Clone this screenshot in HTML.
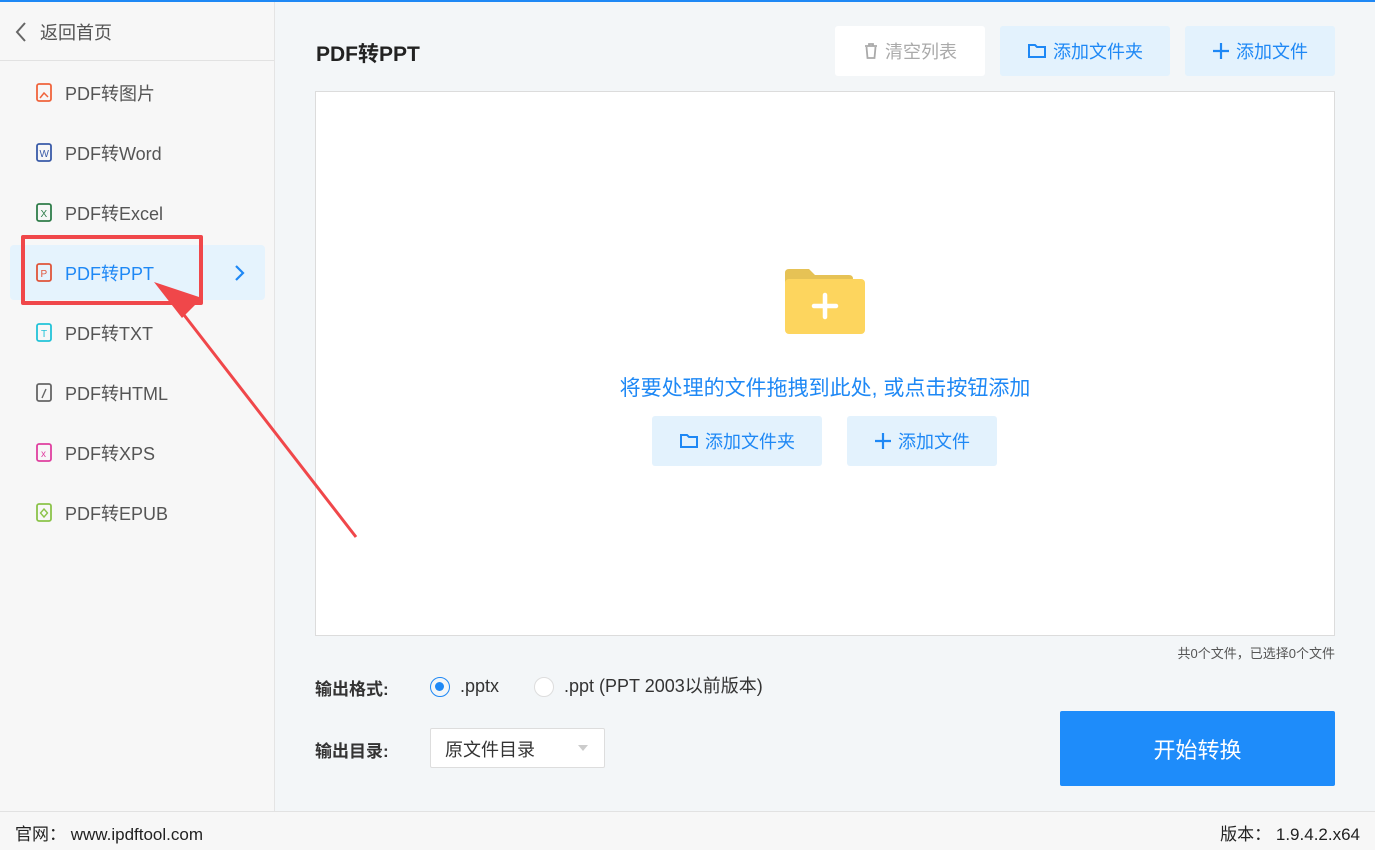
<!DOCTYPE html>
<html><head><meta charset="utf-8"><style>
*{margin:0;padding:0;box-sizing:border-box}
body{width:1375px;height:850px;position:relative;overflow:hidden;background:#f3f6f8;font-family:"Liberation Sans","Noto Sans CJK SC",sans-serif;color:#333}
.topline{position:absolute;left:0;top:0;width:1375px;height:2px;background:#1e88f5}
.side{position:absolute;left:0;top:2px;width:275px;height:809px;background:#f7f7f7;border-right:1px solid #e4e4e4}
.back{position:absolute;left:0;top:0;width:274px;height:59px;border-bottom:1px solid #e2e2e2;font-size:18px;color:#555}
.back span{position:absolute;left:40px;top:17px}
.item{position:absolute;left:10px;width:255px;height:55px;font-size:18px;color:#555;border-radius:4px}
.item span{position:absolute;left:55px;top:15px}
.item svg{position:absolute;left:26px;top:18px}
.item.act{background:#e5f3fd;color:#1e88f5}
.title{position:absolute;left:316px;top:38px;font-size:21px;font-weight:bold;color:#222}
.btn{position:absolute;top:26px;height:50px;border-radius:3px;font-size:18px;color:#1e88f5;background:#e3f2fd;display:flex;align-items:center;justify-content:center;gap:6px}
.drop{position:absolute;left:315px;top:91px;width:1020px;height:545px;background:#fff;border:1px solid #dcdcdc}
.foot{position:absolute;left:0;top:811px;width:1375px;height:39px;background:#f7f7f7;border-top:1px solid #e2e2e2;font-size:17px;color:#222}
</style></head><body>
<div class="topline"></div>
<div class="side">
 <div class="back"><svg style="position:absolute;left:14px;top:19px" width="14" height="22" viewBox="0 0 14 22"><path d="M11 2 L3 11 L11 20" fill="none" stroke="#666" stroke-width="2"/></svg><span>返回首页</span></div>
 <div class="item" style="top:63px"><svg width="18" height="20"><rect x="1" y="1" width="14" height="17" rx="2" fill="none" stroke="#f0643c" stroke-width="1.8"/><path d="M4 15 L8 10 L12 14" fill="none" stroke="#f0643c" stroke-width="1.5"/></svg><span>PDF转图片</span></div>
 <div class="item" style="top:123px"><svg width="18" height="20"><rect x="1" y="1" width="14" height="17" rx="2" fill="none" stroke="#3a5ba8" stroke-width="1.8"/><text x="3.5" y="14" font-size="10" fill="#3a5ba8" font-family="Liberation Sans">W</text></svg><span>PDF转Word</span></div>
 <div class="item" style="top:183px"><svg width="18" height="20"><rect x="1" y="1" width="14" height="17" rx="2" fill="none" stroke="#2f7d4a" stroke-width="1.8"/><text x="4.5" y="14" font-size="10" fill="#2f7d4a" font-family="Liberation Sans">X</text></svg><span>PDF转Excel</span></div>
 <div class="item act" style="top:243px"><svg width="18" height="20"><rect x="1" y="1" width="14" height="17" rx="2" fill="none" stroke="#e0553a" stroke-width="1.8"/><text x="4.5" y="14" font-size="10" fill="#e0553a" font-family="Liberation Sans">P</text></svg><span>PDF转PPT</span><svg style="left:224px;top:19px" width="12" height="18"><path d="M2 2 L9 9 L2 16" fill="none" stroke="#1e88f5" stroke-width="2.2"/></svg></div>
 <div class="item" style="top:303px"><svg width="18" height="20"><rect x="1" y="1" width="14" height="17" rx="2" fill="none" stroke="#22c3d8" stroke-width="1.8"/><text x="5" y="14" font-size="10" fill="#22c3d8" font-family="Liberation Sans">T</text></svg><span>PDF转TXT</span></div>
 <div class="item" style="top:363px"><svg width="18" height="20"><rect x="1" y="1" width="14" height="17" rx="2" fill="none" stroke="#666" stroke-width="1.8"/><path d="M6 15 L10 6" stroke="#666" stroke-width="1.4"/></svg><span>PDF转HTML</span></div>
 <div class="item" style="top:423px"><svg width="18" height="20"><rect x="1" y="1" width="14" height="17" rx="2" fill="none" stroke="#e040a0" stroke-width="1.8"/><text x="5" y="14" font-size="10" fill="#e040a0" font-family="Liberation Sans">x</text></svg><span>PDF转XPS</span></div>
 <div class="item" style="top:483px"><svg width="18" height="20"><rect x="1" y="1" width="14" height="17" rx="2" fill="none" stroke="#8bc34a" stroke-width="1.8"/><path d="M8 6 L11.5 10 L8 14 L4.5 10Z" fill="none" stroke="#8bc34a" stroke-width="1.4"/></svg><span>PDF转EPUB</span></div>
</div>
<div class="title">PDF转PPT</div>
<div class="btn" style="left:835px;width:150px;background:#fff;color:#aaa"><svg width="16" height="18"><path d="M2 4 H14 M6 4 V2 H10 V4 M3.5 5 L4.5 16 H11.5 L12.5 5" fill="none" stroke="#aaa" stroke-width="1.8"/></svg>清空列表</div>
<div class="btn" style="left:1000px;width:170px"><svg width="20" height="16"><path d="M2 2 H8 L10 4 H18 V14 H2 Z" fill="none" stroke="#1e88f5" stroke-width="2"/></svg>添加文件夹</div>
<div class="btn" style="left:1185px;width:150px"><svg width="18" height="18"><path d="M9 1 V17 M1 9 H17" stroke="#1e88f5" stroke-width="2.2"/></svg>添加文件</div>
<div class="drop">
 <svg style="position:absolute;left:469px;top:176px" width="82" height="66"><path d="M0 5 Q0 1 4 1 H24 L30 7 H64 Q68 7 68 11 V40 H0Z" fill="#e6c255"/><rect x="0" y="11" width="80" height="55" rx="4" fill="#fdd55e"/><path d="M40 27 V49 M29 38 H51" stroke="#fff" stroke-width="4.5" stroke-linecap="round"/></svg>
 <div style="position:absolute;left:0;width:100%;top:280px;text-align:center;font-size:21px;color:#1e88f5">将要处理的文件拖拽到此处, 或点击按钮添加</div>
 <div class="btn" style="left:336px;top:324px;width:170px"><svg width="20" height="16"><path d="M2 2 H8 L10 4 H18 V14 H2 Z" fill="none" stroke="#1e88f5" stroke-width="2"/></svg>添加文件夹</div>
 <div class="btn" style="left:531px;top:324px;width:150px"><svg width="18" height="18"><path d="M9 1 V17 M1 9 H17" stroke="#1e88f5" stroke-width="2.2"/></svg>添加文件</div>
</div>
<div style="position:absolute;right:40px;top:643px;font-size:13px;color:#555">共0个文件，已选择0个文件</div>
<div style="position:absolute;left:315px;top:675px;font-size:17px;font-weight:bold;color:#333">输出格式:</div>
<div style="position:absolute;left:430px;top:677px;width:20px;height:20px;border-radius:50%;border:1.5px solid #1e88f5"><div style="position:absolute;left:4px;top:4px;width:9px;height:9px;border-radius:50%;background:#1e88f5"></div></div>
<div style="position:absolute;left:460px;top:675px;font-size:18px;line-height:22px;color:#333">.pptx</div>
<div style="position:absolute;left:534px;top:677px;width:20px;height:20px;border-radius:50%;border:1.5px solid #ddd;background:#fff"></div>
<div style="position:absolute;left:564px;top:675px;font-size:18px;line-height:22px;color:#333">.ppt (PPT 2003以前版本)</div>
<div style="position:absolute;left:315px;top:737px;font-size:17px;font-weight:bold;color:#333">输出目录:</div>
<div style="position:absolute;left:430px;top:728px;width:175px;height:40px;background:#fff;border:1px solid #ddd;border-radius:2px;font-size:18px;padding:7px 14px">原文件目录<span style="position:absolute;right:16px;top:16px;border:5px solid transparent;border-top:6px solid #ccc"></span></div>
<div style="position:absolute;left:1060px;top:711px;width:275px;height:75px;background:#1e8cfa;color:#fff;font-size:22px;display:flex;align-items:center;justify-content:center;border-radius:2px">开始转换</div>
<div class="foot"><span style="position:absolute;left:15px;top:8px">官网：&nbsp;www.ipdftool.com</span><span style="position:absolute;right:15px;top:8px">版本：&nbsp;1.9.4.2.x64</span></div>
<div style="position:absolute;left:21px;top:235px;width:182px;height:70px;border:4px solid #f0474a;border-radius:2px"></div>
<svg style="position:absolute;left:0;top:0" width="400" height="560"><path d="M356 537 L174 302" stroke="#f0474a" stroke-width="3"/><path d="M154 282 L202 298 L182 318 Z" fill="#f0474a"/></svg>
</body></html>
